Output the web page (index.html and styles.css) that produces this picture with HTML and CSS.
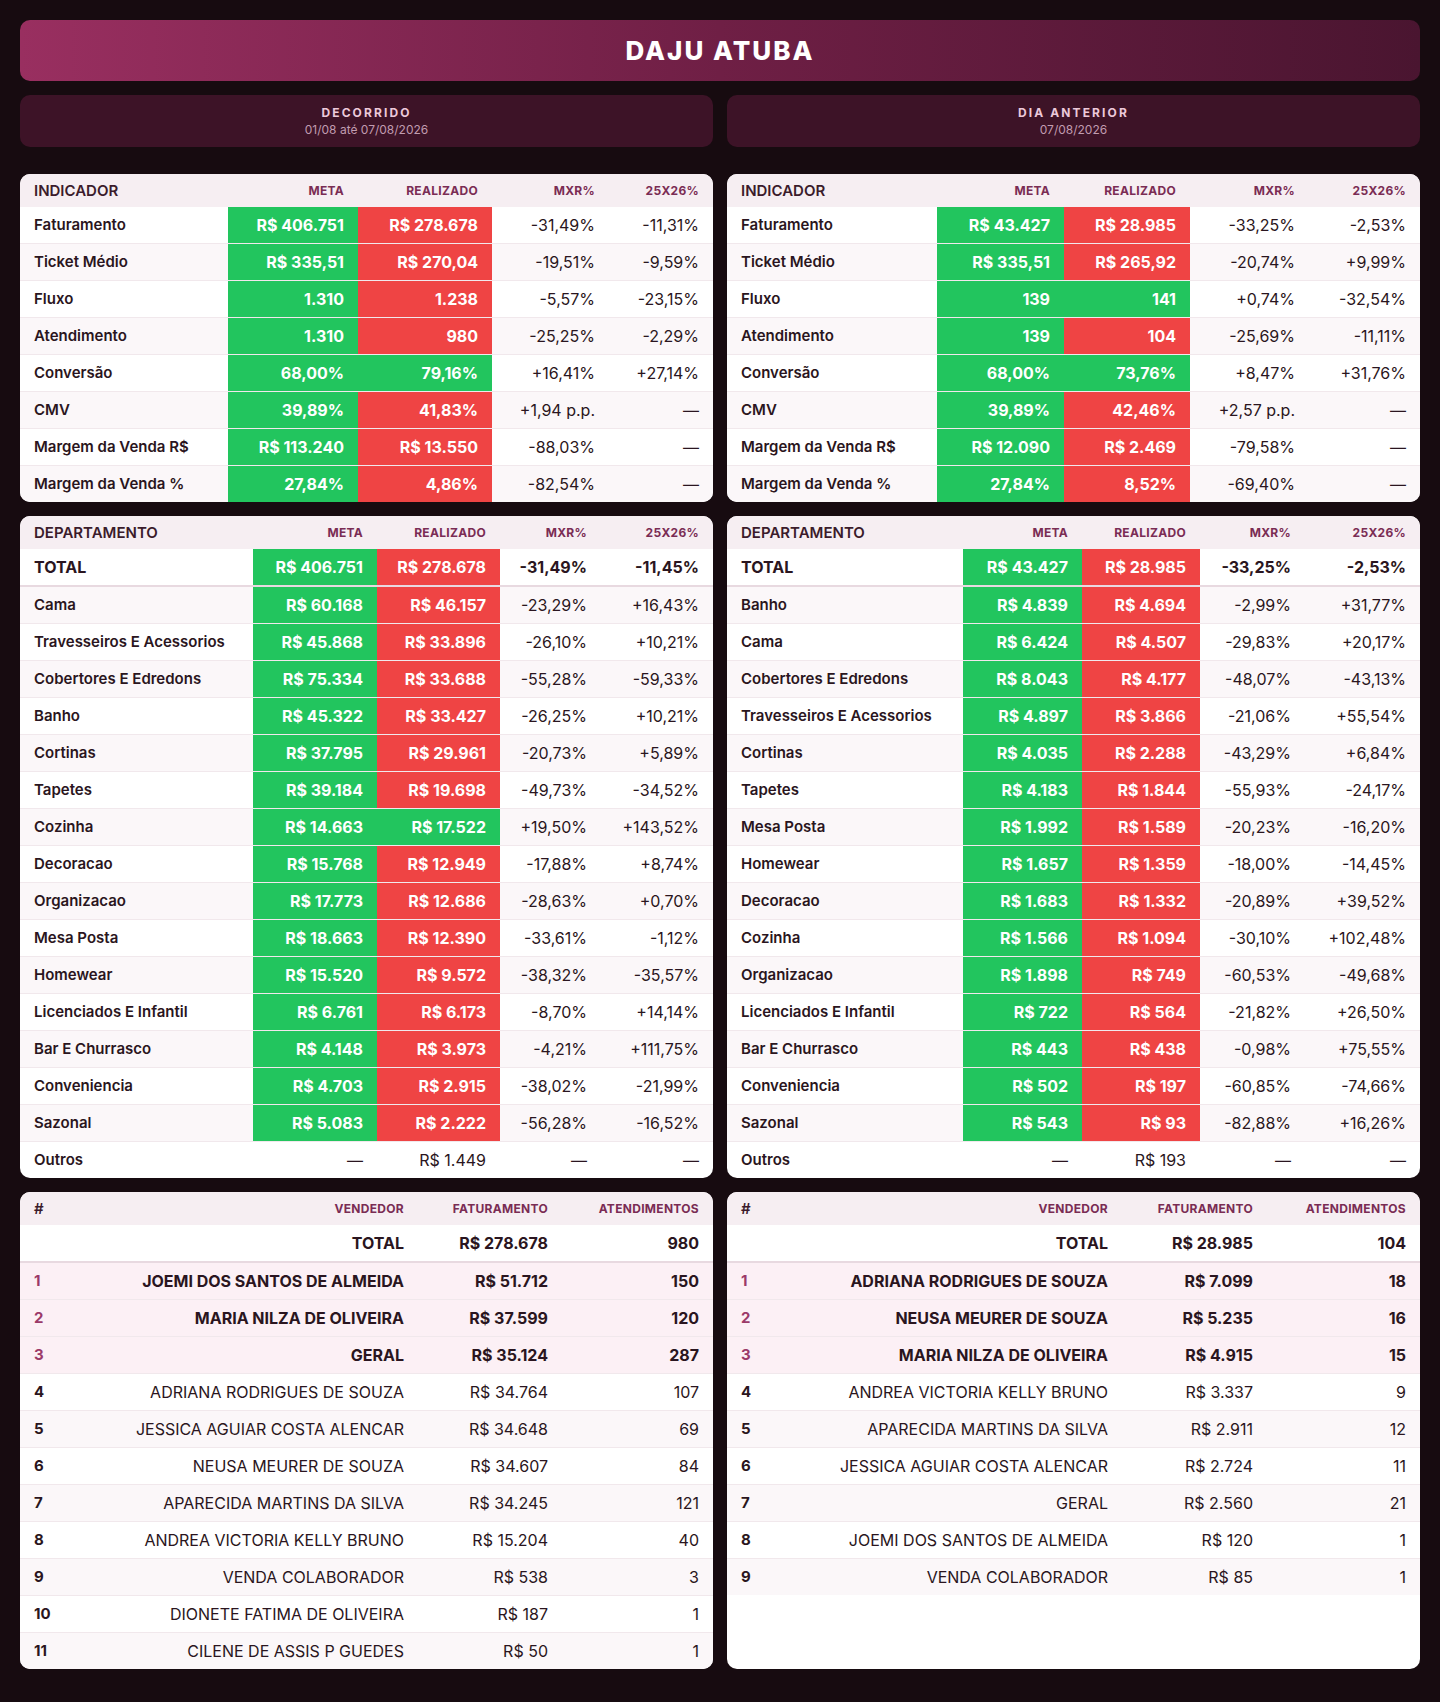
FILE: index.html
```html
<!DOCTYPE html>
<html lang="pt-BR">
<head>
<meta charset="utf-8">
<title>DAJU ATUBA</title>
<link rel="stylesheet" href="styles.css">
</head>
<body>
<div class="page">
  <header class="banner"><h1>DAJU ATUBA</h1></header>

  <div class="periods">
    <div class="period"><div class="period-title">DECORRIDO</div><div class="period-date">01/08 até 07/08/2026</div></div>
    <div class="period"><div class="period-title">DIA ANTERIOR</div><div class="period-date">07/08/2026</div></div>
  </div>

  <div class="grid">
    <!-- Indicadores esquerda -->
    <section class="card">
      <table class="tbl ind-l">
        <colgroup><col class="c1"><col class="c2"><col class="c3"><col class="c4"><col class="c5"></colgroup>
        <thead><tr><th class="lbl">INDICADOR</th><th>META</th><th>REALIZADO</th><th>MXR%</th><th>25X26%</th></tr></thead>
        <tbody>
          <tr><td class="lbl">Faturamento</td><td class="g">R$ 406.751</td><td class="r">R$ 278.678</td><td>-31,49%</td><td>-11,31%</td></tr>
          <tr><td class="lbl">Ticket Médio</td><td class="g">R$ 335,51</td><td class="r">R$ 270,04</td><td>-19,51%</td><td>-9,59%</td></tr>
          <tr><td class="lbl">Fluxo</td><td class="g">1.310</td><td class="r">1.238</td><td>-5,57%</td><td>-23,15%</td></tr>
          <tr><td class="lbl">Atendimento</td><td class="g">1.310</td><td class="r">980</td><td>-25,25%</td><td>-2,29%</td></tr>
          <tr><td class="lbl">Conversão</td><td class="g">68,00%</td><td class="g">79,16%</td><td>+16,41%</td><td>+27,14%</td></tr>
          <tr><td class="lbl">CMV</td><td class="g">39,89%</td><td class="r">41,83%</td><td>+1,94 p.p.</td><td>—</td></tr>
          <tr><td class="lbl">Margem da Venda R$</td><td class="g">R$ 113.240</td><td class="r">R$ 13.550</td><td>-88,03%</td><td>—</td></tr>
          <tr><td class="lbl">Margem da Venda %</td><td class="g">27,84%</td><td class="r">4,86%</td><td>-82,54%</td><td>—</td></tr>
        </tbody>
      </table>
    </section>

    <!-- Indicadores direita -->
    <section class="card">
      <table class="tbl ind-r">
        <colgroup><col class="c1"><col class="c2"><col class="c3"><col class="c4"><col class="c5"></colgroup>
        <thead><tr><th class="lbl">INDICADOR</th><th>META</th><th>REALIZADO</th><th>MXR%</th><th>25X26%</th></tr></thead>
        <tbody>
          <tr><td class="lbl">Faturamento</td><td class="g">R$ 43.427</td><td class="r">R$ 28.985</td><td>-33,25%</td><td>-2,53%</td></tr>
          <tr><td class="lbl">Ticket Médio</td><td class="g">R$ 335,51</td><td class="r">R$ 265,92</td><td>-20,74%</td><td>+9,99%</td></tr>
          <tr><td class="lbl">Fluxo</td><td class="g">139</td><td class="g">141</td><td>+0,74%</td><td>-32,54%</td></tr>
          <tr><td class="lbl">Atendimento</td><td class="g">139</td><td class="r">104</td><td>-25,69%</td><td>-11,11%</td></tr>
          <tr><td class="lbl">Conversão</td><td class="g">68,00%</td><td class="g">73,76%</td><td>+8,47%</td><td>+31,76%</td></tr>
          <tr><td class="lbl">CMV</td><td class="g">39,89%</td><td class="r">42,46%</td><td>+2,57 p.p.</td><td>—</td></tr>
          <tr><td class="lbl">Margem da Venda R$</td><td class="g">R$ 12.090</td><td class="r">R$ 2.469</td><td>-79,58%</td><td>—</td></tr>
          <tr><td class="lbl">Margem da Venda %</td><td class="g">27,84%</td><td class="r">8,52%</td><td>-69,40%</td><td>—</td></tr>
        </tbody>
      </table>
    </section>

    <!-- Departamentos esquerda -->
    <section class="card">
      <table class="tbl dep-l">
        <colgroup><col class="c1"><col class="c2"><col class="c3"><col class="c4"><col class="c5"></colgroup>
        <thead><tr><th class="lbl">DEPARTAMENTO</th><th>META</th><th>REALIZADO</th><th>MXR%</th><th>25X26%</th></tr></thead>
        <tbody>
          <tr class="total"><td class="lbl">TOTAL</td><td class="g">R$ 406.751</td><td class="r">R$ 278.678</td><td>-31,49%</td><td>-11,45%</td></tr>
          <tr><td class="lbl">Cama</td><td class="g">R$ 60.168</td><td class="r">R$ 46.157</td><td>-23,29%</td><td>+16,43%</td></tr>
          <tr><td class="lbl">Travesseiros E Acessorios</td><td class="g">R$ 45.868</td><td class="r">R$ 33.896</td><td>-26,10%</td><td>+10,21%</td></tr>
          <tr><td class="lbl">Cobertores E Edredons</td><td class="g">R$ 75.334</td><td class="r">R$ 33.688</td><td>-55,28%</td><td>-59,33%</td></tr>
          <tr><td class="lbl">Banho</td><td class="g">R$ 45.322</td><td class="r">R$ 33.427</td><td>-26,25%</td><td>+10,21%</td></tr>
          <tr><td class="lbl">Cortinas</td><td class="g">R$ 37.795</td><td class="r">R$ 29.961</td><td>-20,73%</td><td>+5,89%</td></tr>
          <tr><td class="lbl">Tapetes</td><td class="g">R$ 39.184</td><td class="r">R$ 19.698</td><td>-49,73%</td><td>-34,52%</td></tr>
          <tr><td class="lbl">Cozinha</td><td class="g">R$ 14.663</td><td class="g">R$ 17.522</td><td>+19,50%</td><td>+143,52%</td></tr>
          <tr><td class="lbl">Decoracao</td><td class="g">R$ 15.768</td><td class="r">R$ 12.949</td><td>-17,88%</td><td>+8,74%</td></tr>
          <tr><td class="lbl">Organizacao</td><td class="g">R$ 17.773</td><td class="r">R$ 12.686</td><td>-28,63%</td><td>+0,70%</td></tr>
          <tr><td class="lbl">Mesa Posta</td><td class="g">R$ 18.663</td><td class="r">R$ 12.390</td><td>-33,61%</td><td>-1,12%</td></tr>
          <tr><td class="lbl">Homewear</td><td class="g">R$ 15.520</td><td class="r">R$ 9.572</td><td>-38,32%</td><td>-35,57%</td></tr>
          <tr><td class="lbl">Licenciados E Infantil</td><td class="g">R$ 6.761</td><td class="r">R$ 6.173</td><td>-8,70%</td><td>+14,14%</td></tr>
          <tr><td class="lbl">Bar E Churrasco</td><td class="g">R$ 4.148</td><td class="r">R$ 3.973</td><td>-4,21%</td><td>+111,75%</td></tr>
          <tr><td class="lbl">Conveniencia</td><td class="g">R$ 4.703</td><td class="r">R$ 2.915</td><td>-38,02%</td><td>-21,99%</td></tr>
          <tr><td class="lbl">Sazonal</td><td class="g">R$ 5.083</td><td class="r">R$ 2.222</td><td>-56,28%</td><td>-16,52%</td></tr>
          <tr><td class="lbl">Outros</td><td>—</td><td>R$ 1.449</td><td>—</td><td>—</td></tr>
        </tbody>
      </table>
    </section>

    <!-- Departamentos direita -->
    <section class="card">
      <table class="tbl dep-r">
        <colgroup><col class="c1"><col class="c2"><col class="c3"><col class="c4"><col class="c5"></colgroup>
        <thead><tr><th class="lbl">DEPARTAMENTO</th><th>META</th><th>REALIZADO</th><th>MXR%</th><th>25X26%</th></tr></thead>
        <tbody>
          <tr class="total"><td class="lbl">TOTAL</td><td class="g">R$ 43.427</td><td class="r">R$ 28.985</td><td>-33,25%</td><td>-2,53%</td></tr>
          <tr><td class="lbl">Banho</td><td class="g">R$ 4.839</td><td class="r">R$ 4.694</td><td>-2,99%</td><td>+31,77%</td></tr>
          <tr><td class="lbl">Cama</td><td class="g">R$ 6.424</td><td class="r">R$ 4.507</td><td>-29,83%</td><td>+20,17%</td></tr>
          <tr><td class="lbl">Cobertores E Edredons</td><td class="g">R$ 8.043</td><td class="r">R$ 4.177</td><td>-48,07%</td><td>-43,13%</td></tr>
          <tr><td class="lbl">Travesseiros E Acessorios</td><td class="g">R$ 4.897</td><td class="r">R$ 3.866</td><td>-21,06%</td><td>+55,54%</td></tr>
          <tr><td class="lbl">Cortinas</td><td class="g">R$ 4.035</td><td class="r">R$ 2.288</td><td>-43,29%</td><td>+6,84%</td></tr>
          <tr><td class="lbl">Tapetes</td><td class="g">R$ 4.183</td><td class="r">R$ 1.844</td><td>-55,93%</td><td>-24,17%</td></tr>
          <tr><td class="lbl">Mesa Posta</td><td class="g">R$ 1.992</td><td class="r">R$ 1.589</td><td>-20,23%</td><td>-16,20%</td></tr>
          <tr><td class="lbl">Homewear</td><td class="g">R$ 1.657</td><td class="r">R$ 1.359</td><td>-18,00%</td><td>-14,45%</td></tr>
          <tr><td class="lbl">Decoracao</td><td class="g">R$ 1.683</td><td class="r">R$ 1.332</td><td>-20,89%</td><td>+39,52%</td></tr>
          <tr><td class="lbl">Cozinha</td><td class="g">R$ 1.566</td><td class="r">R$ 1.094</td><td>-30,10%</td><td>+102,48%</td></tr>
          <tr><td class="lbl">Organizacao</td><td class="g">R$ 1.898</td><td class="r">R$ 749</td><td>-60,53%</td><td>-49,68%</td></tr>
          <tr><td class="lbl">Licenciados E Infantil</td><td class="g">R$ 722</td><td class="r">R$ 564</td><td>-21,82%</td><td>+26,50%</td></tr>
          <tr><td class="lbl">Bar E Churrasco</td><td class="g">R$ 443</td><td class="r">R$ 438</td><td>-0,98%</td><td>+75,55%</td></tr>
          <tr><td class="lbl">Conveniencia</td><td class="g">R$ 502</td><td class="r">R$ 197</td><td>-60,85%</td><td>-74,66%</td></tr>
          <tr><td class="lbl">Sazonal</td><td class="g">R$ 543</td><td class="r">R$ 93</td><td>-82,88%</td><td>+16,26%</td></tr>
          <tr><td class="lbl">Outros</td><td>—</td><td>R$ 193</td><td>—</td><td>—</td></tr>
        </tbody>
      </table>
    </section>

    <!-- Vendedores esquerda -->
    <section class="card">
      <table class="tbl ven ven-l">
        <colgroup><col class="c1"><col class="c2"><col class="c3"><col class="c4"></colgroup>
        <thead><tr><th class="lbl">#</th><th>VENDEDOR</th><th>FATURAMENTO</th><th>ATENDIMENTOS</th></tr></thead>
        <tbody>
          <tr class="total"><td></td><td>TOTAL</td><td>R$ 278.678</td><td>980</td></tr>
          <tr class="top"><td class="rank">1</td><td>JOEMI DOS SANTOS DE ALMEIDA</td><td>R$ 51.712</td><td>150</td></tr>
          <tr class="top"><td class="rank">2</td><td>MARIA NILZA DE OLIVEIRA</td><td>R$ 37.599</td><td>120</td></tr>
          <tr class="top"><td class="rank">3</td><td>GERAL</td><td>R$ 35.124</td><td>287</td></tr>
          <tr><td class="rank">4</td><td>ADRIANA RODRIGUES DE SOUZA</td><td>R$ 34.764</td><td>107</td></tr>
          <tr><td class="rank">5</td><td>JESSICA AGUIAR COSTA ALENCAR</td><td>R$ 34.648</td><td>69</td></tr>
          <tr><td class="rank">6</td><td>NEUSA MEURER DE SOUZA</td><td>R$ 34.607</td><td>84</td></tr>
          <tr><td class="rank">7</td><td>APARECIDA MARTINS DA SILVA</td><td>R$ 34.245</td><td>121</td></tr>
          <tr><td class="rank">8</td><td>ANDREA VICTORIA KELLY BRUNO</td><td>R$ 15.204</td><td>40</td></tr>
          <tr><td class="rank">9</td><td>VENDA COLABORADOR</td><td>R$ 538</td><td>3</td></tr>
          <tr><td class="rank">10</td><td>DIONETE FATIMA DE OLIVEIRA</td><td>R$ 187</td><td>1</td></tr>
          <tr><td class="rank">11</td><td>CILENE DE ASSIS P GUEDES</td><td>R$ 50</td><td>1</td></tr>
        </tbody>
      </table>
    </section>

    <!-- Vendedores direita -->
    <section class="card">
      <table class="tbl ven ven-r">
        <colgroup><col class="c1"><col class="c2"><col class="c3"><col class="c4"></colgroup>
        <thead><tr><th class="lbl">#</th><th>VENDEDOR</th><th>FATURAMENTO</th><th>ATENDIMENTOS</th></tr></thead>
        <tbody>
          <tr class="total"><td></td><td>TOTAL</td><td>R$ 28.985</td><td>104</td></tr>
          <tr class="top"><td class="rank">1</td><td>ADRIANA RODRIGUES DE SOUZA</td><td>R$ 7.099</td><td>18</td></tr>
          <tr class="top"><td class="rank">2</td><td>NEUSA MEURER DE SOUZA</td><td>R$ 5.235</td><td>16</td></tr>
          <tr class="top"><td class="rank">3</td><td>MARIA NILZA DE OLIVEIRA</td><td>R$ 4.915</td><td>15</td></tr>
          <tr><td class="rank">4</td><td>ANDREA VICTORIA KELLY BRUNO</td><td>R$ 3.337</td><td>9</td></tr>
          <tr><td class="rank">5</td><td>APARECIDA MARTINS DA SILVA</td><td>R$ 2.911</td><td>12</td></tr>
          <tr><td class="rank">6</td><td>JESSICA AGUIAR COSTA ALENCAR</td><td>R$ 2.724</td><td>11</td></tr>
          <tr><td class="rank">7</td><td>GERAL</td><td>R$ 2.560</td><td>21</td></tr>
          <tr><td class="rank">8</td><td>JOEMI DOS SANTOS DE ALMEIDA</td><td>R$ 120</td><td>1</td></tr>
          <tr><td class="rank">9</td><td>VENDA COLABORADOR</td><td>R$ 85</td><td>1</td></tr>
        </tbody>
      </table>
    </section>
  </div>
</div>
</body>
</html>
```

FILE: styles.css
```css
* { box-sizing: border-box; }

html, body {
  margin: 0;
  padding: 0;
  background: #170b10;
}

body {
  font-family: Inter, "Noto Sans", "Liberation Sans", sans-serif;
  color: #2a1520;
}

.page {
  padding: 20px;
  display: flex;
  flex-direction: column;
  gap: 14px;
}

.banner {
  height: 61px;
  border-radius: 10px;
  background: linear-gradient(90deg, #992f60 0%, #6f1f45 50%, #4a1530 100%);
  display: flex;
  align-items: center;
  justify-content: center;
}

.banner h1 {
  margin: 0;
  color: #ffffff;
  font-size: 26px;
  font-weight: 800;
  letter-spacing: 2px;
}

.periods {
  display: grid;
  grid-template-columns: 1fr 1fr;
  gap: 14px;
  margin-bottom: 13px;
}

.period {
  height: 52px;
  border-radius: 10px;
  background: #3d1327;
  display: flex;
  flex-direction: column;
  align-items: center;
  justify-content: center;
}

.period-title {
  color: #ecc9da;
  font-size: 12px;
  font-weight: 700;
  letter-spacing: 2.1px;
  line-height: 16px;
}

.period-date {
  color: #c19cb0;
  font-size: 12px;
  line-height: 16px;
  margin-top: 1px;
}

.grid {
  display: grid;
  grid-template-columns: 1fr 1fr;
  column-gap: 14px;
  row-gap: 14px;
}

.card {
  background: #ffffff;
  border-radius: 10px;
  overflow: hidden;
}

.tbl {
  width: 100%;
  table-layout: fixed;
  border-collapse: separate;
  border-spacing: 0;
}

.tbl th {
  height: 33px;
  padding: 0 14px;
  background: #f6eef2;
  color: #7a2c54;
  font-size: 12px;
  font-weight: 700;
  letter-spacing: 0.3px;
  text-align: right;
  white-space: nowrap;
}

.tbl th.lbl {
  text-align: left;
  color: #3b1b2b;
  font-size: 15px;
  font-weight: 600;
  letter-spacing: 0;
}

.tbl td {
  padding: 8px 14px;
  line-height: 20px;
  font-size: 16px;
  text-align: right;
  border-bottom: 1px solid #f1e8ec;
  white-space: nowrap;
}

.tbl tbody tr:nth-child(even) td { background: #fbf7f9; }
.tbl tbody tr:last-child td { border-bottom: none; }

.tbl td.lbl {
  text-align: left;
  font-weight: 600;
  font-size: 15px;
}

.tbl td.g {
  background: #22c55e !important;
  color: #ffffff;
  font-weight: 700;
}

.tbl td.r {
  background: #ef4444 !important;
  color: #ffffff;
  font-weight: 700;
}

.tbl tr.total td {
  font-weight: 700;
  font-size: 16px;
  border-bottom: 2px solid #e8d9e0;
}

/* column widths */
.ind-l .c1 { width: 208px; } .ind-l .c2 { width: 130px; } .ind-l .c3 { width: 134px; } .ind-l .c4 { width: 117px; } .ind-l .c5 { width: 104px; }
.ind-r .c1 { width: 210px; } .ind-r .c2 { width: 127px; } .ind-r .c3 { width: 126px; } .ind-r .c4 { width: 119px; } .ind-r .c5 { width: 111px; }
.dep-l .c1 { width: 233px; } .dep-l .c2 { width: 124px; } .dep-l .c3 { width: 123px; } .dep-l .c4 { width: 101px; } .dep-l .c5 { width: 112px; }
.dep-r .c1 { width: 236px; } .dep-r .c2 { width: 119px; } .dep-r .c3 { width: 118px; } .dep-r .c4 { width: 105px; } .dep-r .c5 { width: 115px; }
.ven-l .c1 { width: 60px; } .ven-l .c2 { width: 338px; } .ven-l .c3 { width: 144px; } .ven-l .c4 { width: 151px; }
.ven-r .c1 { width: 60px; } .ven-r .c2 { width: 335px; } .ven-r .c3 { width: 145px; } .ven-r .c4 { width: 153px; }

/* vendors */
.ven td.rank {
  text-align: left;
  font-weight: 700;
  font-size: 15px;
}

.ven tr.top td {
  background: #fcf0f5 !important;
  font-weight: 700;
}

.ven tr.top td.rank { color: #9b3a69; }
```
